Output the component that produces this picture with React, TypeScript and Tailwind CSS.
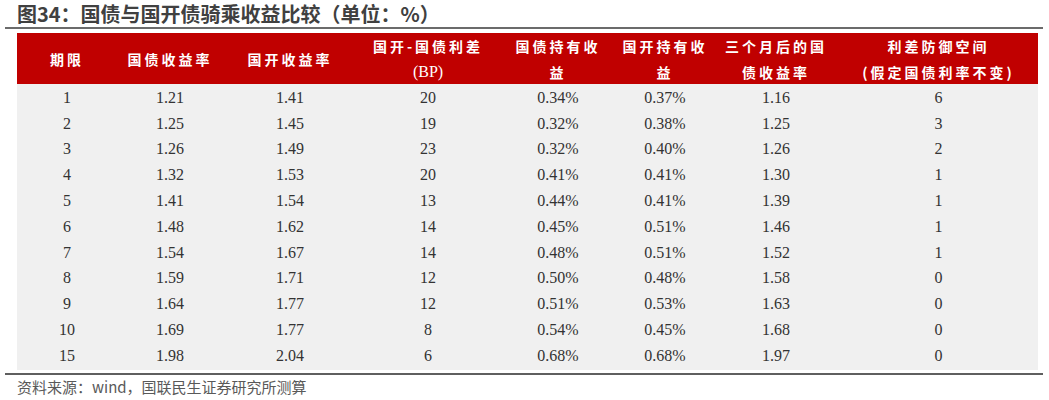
import React from 'react';

const headers: string[][] = [
  ['期限'],
  ['国债收益率'],
  ['国开收益率'],
  ['国开-国债利差', '(BP)'],
  ['国债持有收', '益'],
  ['国开持有收', '益'],
  ['三个月后的国', '债收益率'],
  ['利差防御空间', '(假定国债利率不变)'],
];

const rows: string[][] = [
  ['1', '1.21', '1.41', '20', '0.34%', '0.37%', '1.16', '6'],
  ['2', '1.25', '1.45', '19', '0.32%', '0.38%', '1.25', '3'],
  ['3', '1.26', '1.49', '23', '0.32%', '0.40%', '1.26', '2'],
  ['4', '1.32', '1.53', '20', '0.41%', '0.41%', '1.30', '1'],
  ['5', '1.41', '1.54', '13', '0.44%', '0.41%', '1.39', '1'],
  ['6', '1.48', '1.62', '14', '0.45%', '0.51%', '1.46', '1'],
  ['7', '1.54', '1.67', '14', '0.48%', '0.51%', '1.52', '1'],
  ['8', '1.59', '1.71', '12', '0.50%', '0.48%', '1.58', '0'],
  ['9', '1.64', '1.77', '12', '0.51%', '0.53%', '1.63', '0'],
  ['10', '1.69', '1.77', '8', '0.54%', '0.45%', '1.68', '0'],
  ['15', '1.98', '2.04', '6', '0.68%', '0.68%', '1.97', '0'],
];

const cols = 'grid grid-cols-[100px_106px_134px_142px_118px_96px_126px_1fr]';

const App: React.FC = () => {
  return (
    <div className="w-[1049px] h-[400px] bg-white pl-[5px] pr-[6px]">
      <div className="h-[27px] pl-[12px] flex items-center text-[20px] font-bold text-[#404040] leading-none font-['Noto_Sans_CJK_SC',sans-serif]">
        图34：国债与国开债骑乘收益比较（单位：%）
      </div>
      <div className="h-[2px] bg-[#6b6b6b]" />

      <div className="mt-[4px] ml-[12px] mr-[5px]">
        <div className={`${cols} h-[51px] bg-[#c00000] text-white text-[14px] tracking-[3px] font-bold font-['Noto_Sans_CJK_SC',sans-serif]`}>
          {headers.map((h, i) => (
            <div key={i} className="flex flex-col items-center justify-center leading-[26px]">
              {h.map((line, j) => (
                <span key={j} className={line === '(BP)' ? "font-['Liberation_Serif',serif] font-normal text-[16px] tracking-normal" : ''}>
                  {line}
                </span>
              ))}
            </div>
          ))}
        </div>

        <div className="bg-[#f0f0f0] py-[1px] font-['Liberation_Serif',serif] text-[16px] text-[#333333]">
          {rows.map((r, i) => (
            <div key={i} className={`${cols} h-[25.8px] items-center`}>
              {r.map((c, j) => (
                <div key={j} className="text-center leading-none">
                  {c}
                </div>
              ))}
            </div>
          ))}
        </div>
      </div>

      <div className="mt-[3px] h-[2px] bg-[#5f5f5f]" />
      <div className="pl-[12px] pt-[1px] text-[15px] leading-[22px] text-[#595959] font-['Noto_Sans_CJK_SC',sans-serif]">
        资料来源：wind，国联民生证券研究所测算
      </div>
    </div>
  );
};

export default App;
